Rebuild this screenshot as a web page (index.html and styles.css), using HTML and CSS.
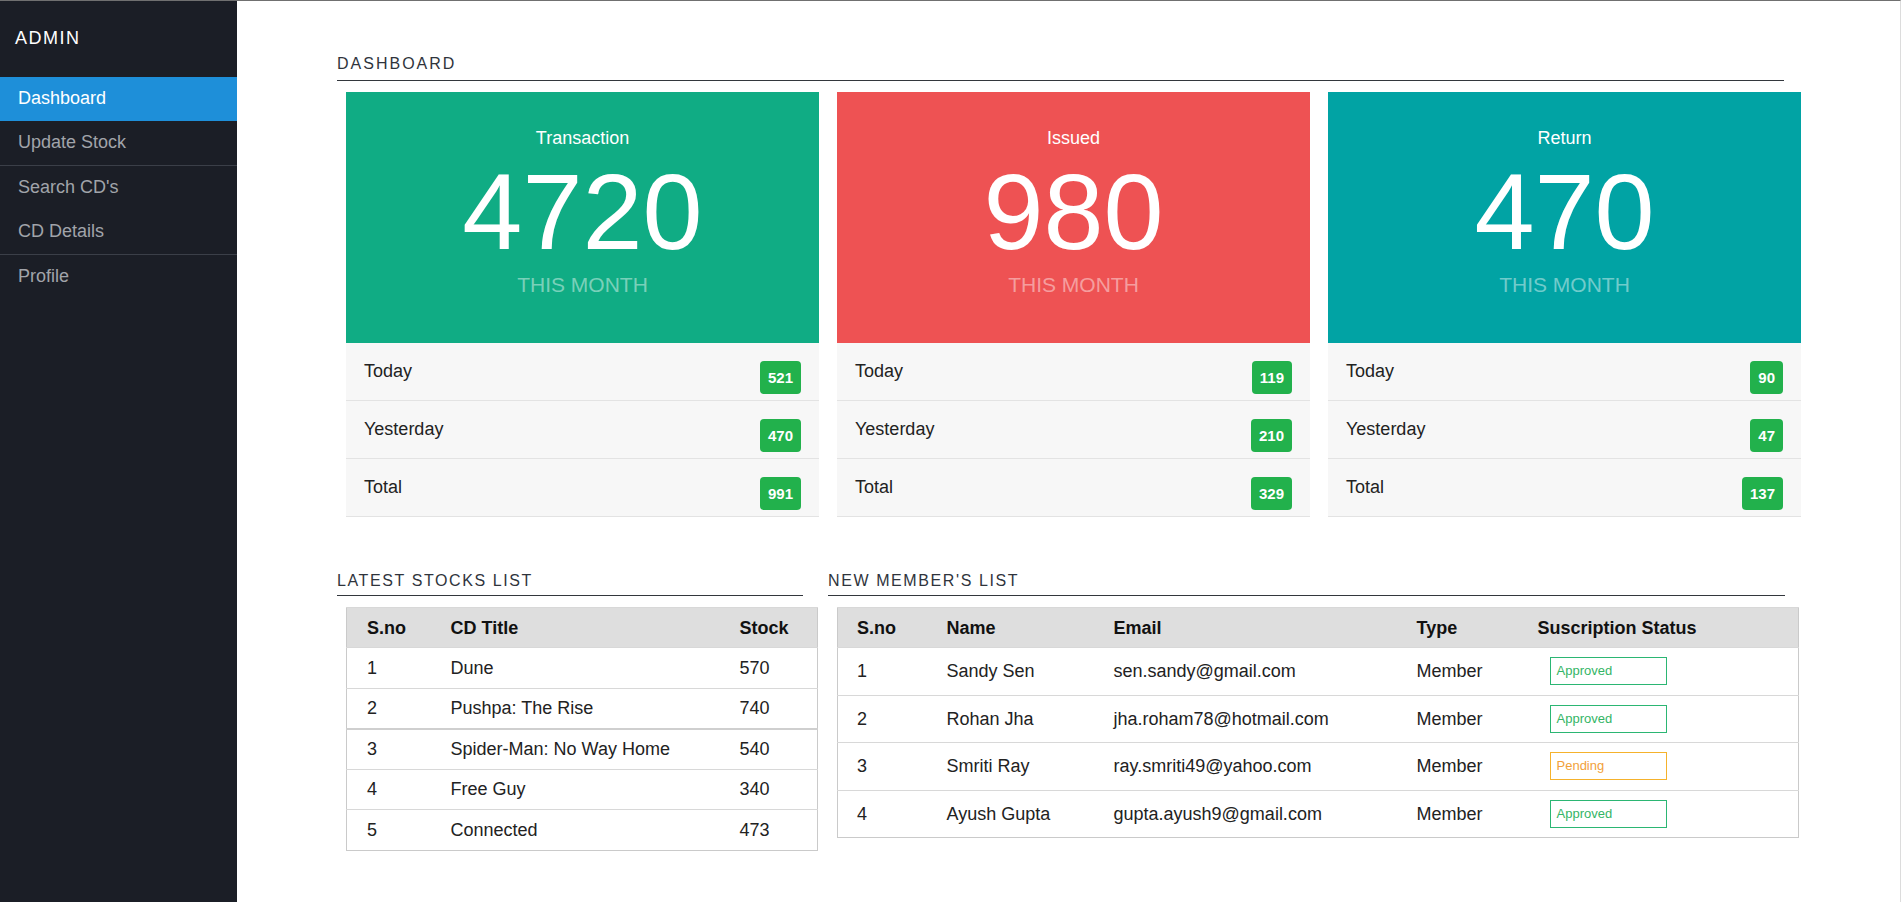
FILE: index.html
```html
<!DOCTYPE html>
<html lang="en">
<head>
<meta charset="utf-8">
<title>Admin Dashboard</title>
<link rel="stylesheet" href="styles.css">
</head>
<body>
<div class="app">
  <aside class="sidebar">
    <div class="brand">ADMIN</div>
    <nav class="nav">
      <a class="nav-item active">Dashboard</a>
      <a class="nav-item sep">Update Stock</a>
      <a class="nav-item">Search CD's</a>
      <a class="nav-item sep">CD Details</a>
      <a class="nav-item">Profile</a>
    </nav>
  </aside>
  <main class="main">
    <h2 class="section-title dash-title">DASHBOARD</h2>
    <div class="cards">
      <div class="card">
        <div class="card-top green">
          <div class="card-label">Transaction</div>
          <div class="card-number">4720</div>
          <div class="card-sub">THIS MONTH</div>
        </div>
        <ul class="stat-list">
          <li class="stat-row"><span class="stat-label">Today</span><span class="badge">521</span></li>
          <li class="stat-row"><span class="stat-label">Yesterday</span><span class="badge">470</span></li>
          <li class="stat-row"><span class="stat-label">Total</span><span class="badge">991</span></li>
        </ul>
      </div>
      <div class="card">
        <div class="card-top red">
          <div class="card-label">Issued</div>
          <div class="card-number">980</div>
          <div class="card-sub">THIS MONTH</div>
        </div>
        <ul class="stat-list">
          <li class="stat-row"><span class="stat-label">Today</span><span class="badge">119</span></li>
          <li class="stat-row"><span class="stat-label">Yesterday</span><span class="badge">210</span></li>
          <li class="stat-row"><span class="stat-label">Total</span><span class="badge">329</span></li>
        </ul>
      </div>
      <div class="card">
        <div class="card-top teal">
          <div class="card-label">Return</div>
          <div class="card-number">470</div>
          <div class="card-sub">THIS MONTH</div>
        </div>
        <ul class="stat-list">
          <li class="stat-row"><span class="stat-label">Today</span><span class="badge">90</span></li>
          <li class="stat-row"><span class="stat-label">Yesterday</span><span class="badge">47</span></li>
          <li class="stat-row"><span class="stat-label">Total</span><span class="badge">137</span></li>
        </ul>
      </div>
    </div>

    <div class="lists">
      <section class="list-col">
        <h3 class="section-title list-title">LATEST STOCKS LIST</h3>
        <table class="data-table stock-table">
          <colgroup><col class="c-sno1"><col class="c-title"><col></colgroup>
          <thead>
            <tr><th>S.no</th><th>CD Title</th><th>Stock</th></tr>
          </thead>
          <tbody>
            <tr><td>1</td><td>Dune</td><td>570</td></tr>
            <tr class="thick"><td>2</td><td>Pushpa: The Rise</td><td>740</td></tr>
            <tr><td>3</td><td>Spider-Man: No Way Home</td><td>540</td></tr>
            <tr><td>4</td><td>Free Guy</td><td>340</td></tr>
            <tr><td>5</td><td>Connected</td><td>473</td></tr>
          </tbody>
        </table>
      </section>
      <section class="list-col">
        <h3 class="section-title list-title">NEW MEMBER'S LIST</h3>
        <table class="data-table member-table">
          <colgroup><col class="c-sno2"><col class="c-name"><col class="c-email"><col class="c-type"><col></colgroup>
          <thead>
            <tr><th>S.no</th><th>Name</th><th>Email</th><th>Type</th><th>Suscription Status</th></tr>
          </thead>
          <tbody>
            <tr><td>1</td><td>Sandy Sen</td><td>sen.sandy@gmail.com</td><td>Member</td><td><span class="status approved">Approved</span></td></tr>
            <tr><td>2</td><td>Rohan Jha</td><td>jha.roham78@hotmail.com</td><td>Member</td><td><span class="status approved">Approved</span></td></tr>
            <tr><td>3</td><td>Smriti Ray</td><td>ray.smriti49@yahoo.com</td><td>Member</td><td><span class="status pending">Pending</span></td></tr>
            <tr><td>4</td><td>Ayush Gupta</td><td>gupta.ayush9@gmail.com</td><td>Member</td><td><span class="status approved">Approved</span></td></tr>
          </tbody>
        </table>
      </section>
    </div>
  </main>
</div>
</body>
</html>
```
FILE: styles.css
```css
* { box-sizing: border-box; }

html, body {
  margin: 0;
  padding: 0;
}

body {
  font-family: "Liberation Sans", Arial, sans-serif;
  font-size: 18px;
  color: #222;
  background: #fff;
  border-top: 1px solid #707070;
  border-right: 1px solid #dcdcdc;
  overflow: hidden;
}

.app {
  display: flex;
  min-height: 901px;
}

/* Sidebar */
.sidebar {
  width: 237px;
  flex: none;
  background: #1b1e26;
}

.brand {
  color: #fff;
  font-size: 18px;
  line-height: 20px;
  letter-spacing: 1.5px;
  padding: 27px 15px 29px;
}

.nav {
  display: flex;
  flex-direction: column;
}

.nav-item {
  display: block;
  height: 44px;
  padding: 11px 18px 13px;
  font-size: 18px;
  line-height: 20px;
  color: #a1a4aa;
  text-decoration: none;
}

.nav-item.active {
  background: #1e8fd9;
  color: #fff;
}

.nav-item.sep {
  height: 45px;
  border-bottom: 1px solid #3b3f48;
}

/* Main */
.main {
  flex: 1;
  padding: 53px 0 0 100px;
}

.section-title {
  margin: 0;
  font-weight: normal;
  font-size: 16px;
  line-height: 20px;
  color: #2f343c;
  border-bottom: 1px solid #33373d;
}

.dash-title {
  width: 1447px;
  letter-spacing: 2px;
  padding-bottom: 6px;
}

.cards {
  display: grid;
  grid-template-columns: repeat(3, 473px);
  column-gap: 18px;
  margin: 11px 0 0 9px;
}

.card-top {
  height: 251px;
  padding-top: 36px;
  display: flex;
  flex-direction: column;
  align-items: center;
  color: #fff;
}

.card-top.green { background: #10ac84; }
.card-top.red { background: #ee5253; }
.card-top.teal { background: #01a3a4; }

.card-label {
  font-size: 18px;
  line-height: 20px;
}

.card-number {
  margin-top: 9px;
  font-size: 108px;
  line-height: 110px;
}

.card-sub {
  margin-top: 5px;
  font-size: 21px;
  line-height: 26px;
  color: rgba(255, 255, 255, 0.45);
}

.stat-list {
  list-style: none;
  margin: 0;
  padding: 0;
  background: #f7f7f7;
}

.stat-row {
  display: flex;
  justify-content: space-between;
  align-items: flex-start;
  height: 58px;
  padding: 0 18px;
  border-bottom: 1px solid #e3e3e3;
}

.stat-label {
  padding-top: 18px;
  font-size: 18px;
  line-height: 20px;
  color: #222;
}

.badge {
  margin-top: 18px;
  padding: 8px 8px;
  font-size: 15px;
  line-height: 17px;
  font-weight: bold;
  color: #fff;
  background: #22b14c;
  border-radius: 4px;
}

/* Lists */
.lists {
  display: grid;
  grid-template-columns: 466px 957px;
  column-gap: 25px;
  margin-top: 54px;
}

.list-title {
  letter-spacing: 1.6px;
  padding-bottom: 4px;
}

.data-table {
  margin: 11px 0 0 9px;
  border-collapse: collapse;
  table-layout: fixed;
  border: 1px solid #cacaca;
  font-size: 18px;
  color: #222;
}

.stock-table { width: 472px; }
.member-table { width: 962px; }

.c-sno1 { width: 84px; }
.c-title { width: 289px; }
.c-sno2 { width: 90px; }
.c-name { width: 167px; }
.c-email { width: 303px; }
.c-type { width: 121px; }

.data-table th,
.data-table td {
  text-align: left;
  padding: 0 0 0 20px;
  height: 40px;
  line-height: 20px;
  border-top: 1px solid #d8d8d8;
  vertical-align: middle;
  white-space: nowrap;
}

.member-table th,
.member-table td {
  padding-left: 19px;
}

.data-table th {
  background: #dedede;
  font-weight: bold;
  color: #111;
}

.stock-table td {
  height: 40.5px;
}

.member-table td {
  height: 47.5px;
}

.stock-table tr.thick td {
  border-bottom: 2px solid #cfcfcf;
}

.status {
  display: inline-block;
  width: 117px;
  height: 28px;
  margin-left: 12px;
  padding-left: 6px;
  font-size: 13px;
  line-height: 26px;
  border: 1px solid;
  vertical-align: middle;
}

.status.approved {
  color: #34b565;
  border-color: #2bb673;
}

.status.pending {
  color: #f2a13a;
  border-color: #f5b22c;
}
```
